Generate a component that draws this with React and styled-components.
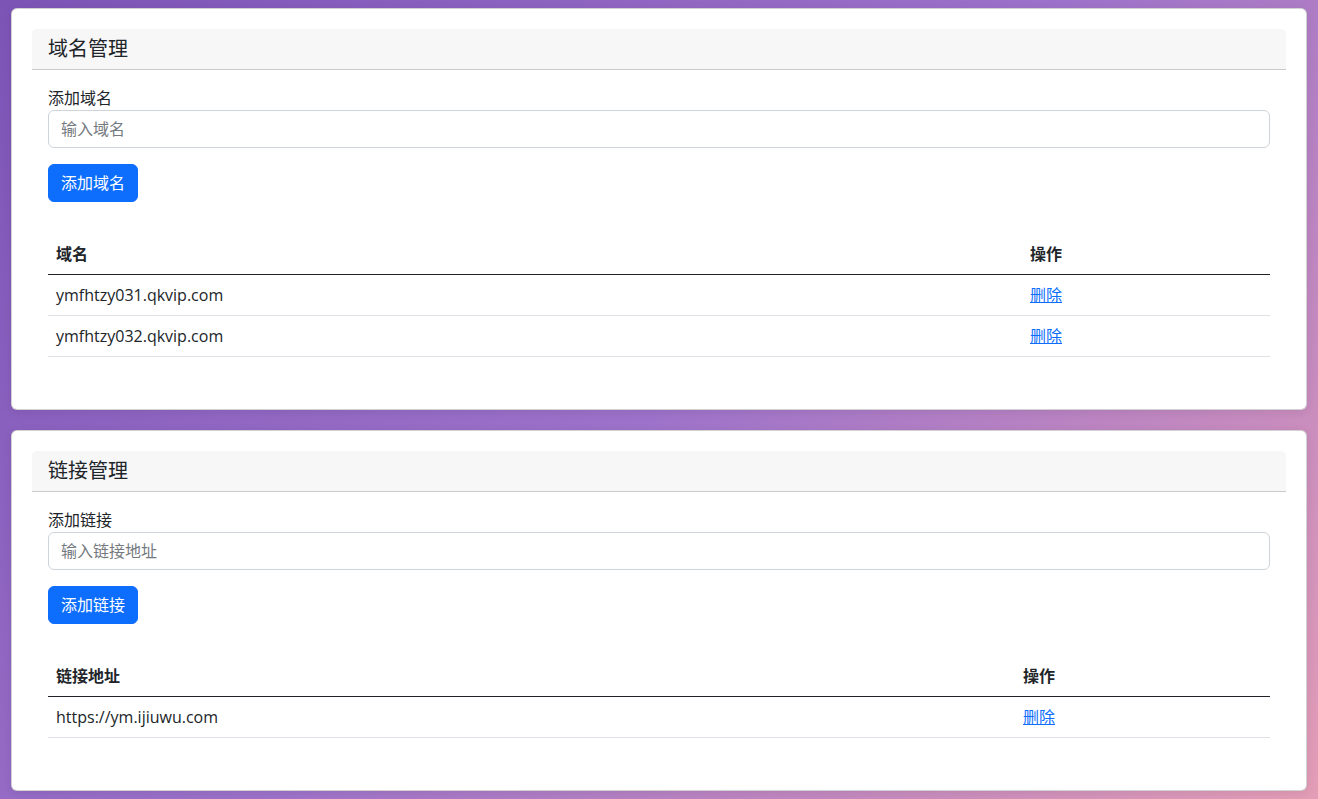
import React from 'react'
import styled, { createGlobalStyle } from 'styled-components'

const GlobalStyle = createGlobalStyle`
  html, body {
    margin: 0;
    min-height: 100%;
  }
  body {
    min-height: 100vh;
    background: linear-gradient(135deg, #7c54b6 0%, #9d72ca 50%, #e59eb6 100%);
    font-family: "Open Sans", "Noto Sans CJK SC", sans-serif;
    font-size: 16px;
    line-height: 1.5;
    color: #212529;
  }
  * {
    box-sizing: border-box;
  }
`

const Page = styled.div`
  padding: 8px 11px;
`

const Panel = styled.section`
  background: #fff;
  border: 1px solid rgba(0, 0, 0, 0.175);
  border-radius: 6px;
  padding: 20px;
  margin-bottom: 20px;
  box-shadow: 0 2px 10px rgba(0, 0, 0, 0.08);
`

const PanelHeader = styled.div`
  background: #f7f7f7;
  border-bottom: 1px solid rgba(0, 0, 0, 0.175);
  border-radius: 5px 5px 0 0;
  padding: 8px 16px;
`

const Title = styled.h5`
  margin: 0;
  font-size: 20px;
  font-weight: 400;
  line-height: 24px;
`

const PanelBody = styled.div`
  padding: 16px;
`

const Label = styled.label`
  display: block;
  line-height: 24px;
`

const Input = styled.input`
  display: block;
  width: 100%;
  height: 38px;
  padding: 6px 12px;
  font: inherit;
  color: #212529;
  border: 1px solid #ced4da;
  border-radius: 6px;
  margin-bottom: 16px;
  outline: none;

  &::placeholder {
    color: #757a80;
  }
`

const Button = styled.button`
  display: block;
  height: 38px;
  padding: 6px 12px;
  font: inherit;
  color: #fff;
  background: #0d6efd;
  border: 1px solid #0d6efd;
  border-radius: 6px;
  cursor: pointer;
  margin-bottom: 32px;
`

const Table = styled.table`
  width: 100%;
  border-collapse: collapse;
  margin-bottom: 16px;
`

const Th = styled.th`
  text-align: left;
  font-weight: 700;
  padding: 8px;
  line-height: 24px;
  border-bottom: 1px solid #212529;
  width: ${p => (p.$width ? `${p.$width}px` : 'auto')};
`

const Td = styled.td`
  padding: 8px;
  line-height: 24px;
  border-bottom: 1px solid #dee2e6;
`

const DeleteLink = styled.a`
  color: #0d6efd;
  text-decoration: underline;
  cursor: pointer;
`

const Manager = ({ title, label, placeholder, button, column, actionWidth, rows }) => (
  <Panel>
    <PanelHeader>
      <Title>{title}</Title>
    </PanelHeader>
    <PanelBody>
      <Label>{label}</Label>
      <Input placeholder={placeholder} />
      <Button>{button}</Button>
      <Table>
        <thead>
          <tr>
            <Th>{column}</Th>
            <Th $width={actionWidth}>操作</Th>
          </tr>
        </thead>
        <tbody>
          {rows.map(r => (
            <tr key={r}>
              <Td>{r}</Td>
              <Td>
                <DeleteLink href="#">删除</DeleteLink>
              </Td>
            </tr>
          ))}
        </tbody>
      </Table>
    </PanelBody>
  </Panel>
)

const App = () => (
  <Page>
    <GlobalStyle />
    <Manager
      title="域名管理"
      label="添加域名"
      placeholder="输入域名"
      button="添加域名"
      column="域名"
      actionWidth={248}
      rows={['ymfhtzy031.qkvip.com', 'ymfhtzy032.qkvip.com']}
    />
    <Manager
      title="链接管理"
      label="添加链接"
      placeholder="输入链接地址"
      button="添加链接"
      column="链接地址"
      actionWidth={255}
      rows={['https://ym.ijiuwu.com']}
    />
  </Page>
)

export default App
